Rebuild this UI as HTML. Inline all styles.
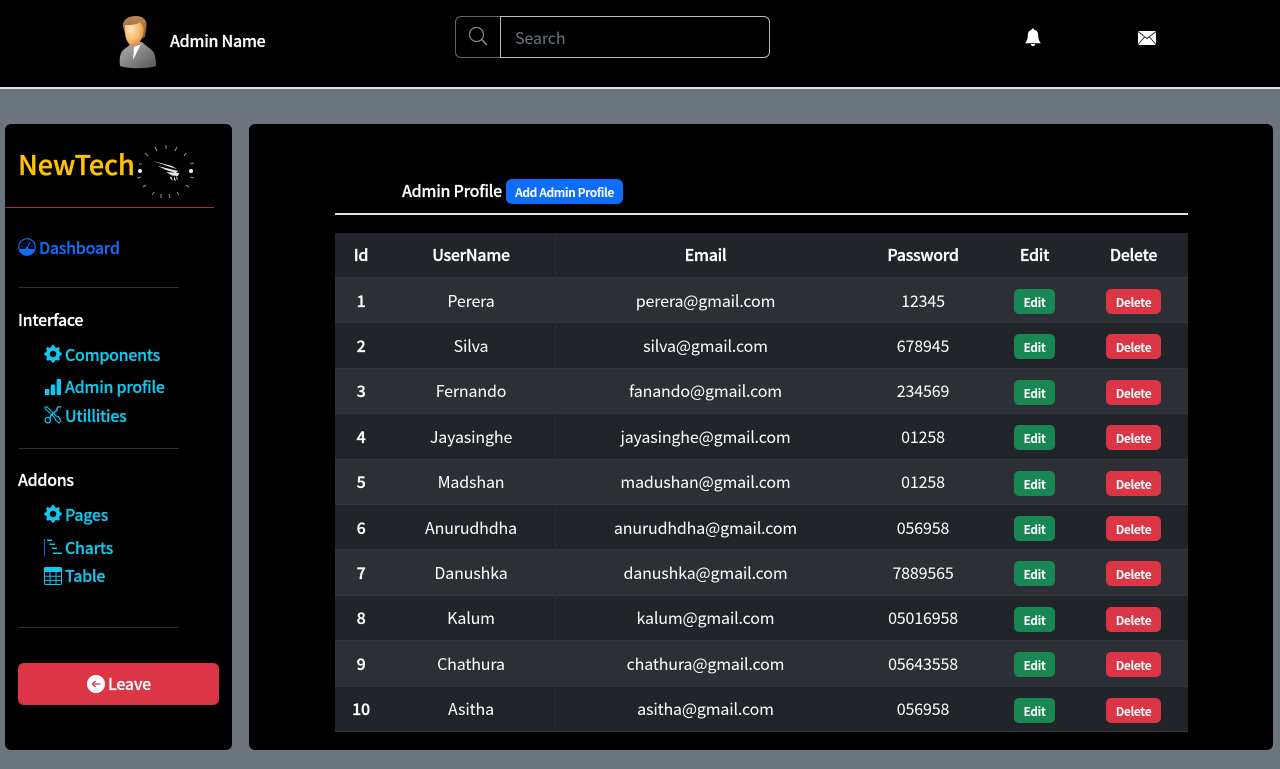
<!DOCTYPE html>
<html lang="en"><head><meta charset="utf-8"><title>Admin</title>
<style>
*{box-sizing:border-box;margin:0;padding:0}
html,body{width:1280px;height:769px;overflow:hidden;background:#6c757d}
body,.n{font-family:"Noto Sans CJK JP","Liberation Sans",sans-serif}
.a{position:absolute;white-space:nowrap;line-height:1}
#top{position:absolute;left:0;top:0;width:1280px;height:87px;background:#000}
#wl{position:absolute;left:0;top:87px;width:1280px;height:2px;background:#dee2e6}
#side{position:absolute;left:5px;top:124px;width:227px;height:626px;background:#000;border-radius:6px}
#main{position:absolute;left:249px;top:124px;width:1024px;height:626px;background:#000;border-radius:6px}
.hr{position:absolute;left:18px;width:161px;height:1px;background:#2f2f2f}
.nav,.h,.s{font-size:16px;font-weight:500;line-height:20px;letter-spacing:-.3px;-webkit-text-stroke:.2px currentColor}
.nav{position:absolute;left:65px;color:#0dcaf0}
.h{position:absolute;left:18px;color:#fff}
svg{position:absolute;display:block}
.row{position:absolute;left:335px;width:853px;border-top:1px solid #33373b}
.c{position:absolute;top:0;height:100%;display:flex;align-items:center;justify-content:center;color:#fff;font-size:16px;white-space:nowrap;padding-bottom:1.4px;letter-spacing:-.15px}
.b{font-weight:500;letter-spacing:-.3px;-webkit-text-stroke:.3px #fff}
.btn{display:block;color:#fff;font-size:12px;font-weight:700;letter-spacing:-.4px;text-align:center;border-radius:5px;height:25px;line-height:27px;margin-top:4px;-webkit-text-stroke:0}
.e{background:#198754;width:41px}
.d{background:#dc3545;width:55px}
</style></head><body>
<div id="top"></div><div id="wl"></div>

<svg style="left:118px;top:14px" width="40" height="56" viewBox="0 0 40 56">
<defs>
<radialGradient id="face" cx=".35" cy=".3" r=".8"><stop offset="0" stop-color="#fee6bf"/><stop offset=".6" stop-color="#f7b468"/><stop offset="1" stop-color="#d47c26"/></radialGradient>
<linearGradient id="suit" x1="0" y1="0" x2="1" y2="1"><stop offset="0" stop-color="#b4b4b4"/><stop offset="1" stop-color="#565656"/></linearGradient>
<linearGradient id="hair" x1="0" y1="0" x2="0" y2="1"><stop offset="0" stop-color="#c08a52"/><stop offset="1" stop-color="#80562c"/></linearGradient>
</defs>
<path d="M2 52C1 44 2 37 8 34L15 28H24L31 34C37 37 38 44 38 52C30 55 10 55 2 52Z" fill="url(#suit)"/>
<path d="M16 33L23 30L15 46Z" fill="#fff"/>
<path d="M5 13C4 6 10 2 18 2C25 2 29 6 28.500 12L27 23L23 25L8 22Z" fill="url(#hair)"/>
<path d="M7 11C12 11 19 11 22 8C25 11 26 14 25.500 18C25 25 20 32 15.500 32C10 32 6 24 7 11Z" fill="url(#face)"/>
</svg>
<div class="a s" style="left:170px;top:29px;line-height:22px;color:#fff">Admin Name</div>

<div class="a" style="left:455px;top:16px;width:46px;height:42px;border:1px solid #5c6870;border-right:1px solid #6c757d;border-radius:6px 0 0 6px"></div>
<svg style="left:468px;top:26px" width="21" height="21" viewBox="0 0 21 21" fill="none" stroke="#7f8c96" stroke-width="1.2"><circle cx="8.5" cy="8.5" r="7"/><path d="M13.6 13.6L18.8 18.8" stroke-width="1.6"/></svg>
<div class="a" style="left:500px;top:16px;width:270px;height:42px;border:1px solid #b8bcc0;border-radius:0 6px 6px 0"></div>
<div class="a" style="left:515px;top:25.500px;font-size:16px;line-height:22px;color:#6c757d;letter-spacing:-.1px">Search</div>

<svg style="left:1024px;top:28px" width="18" height="19" viewBox="0 0 16 18"><path d="M8 0.5C9 .5 9.2 1.2 9.2 1.7C12 2.4 13 4.6 13 7.5C13 10.5 13.8 12.4 15.5 14.4H.5C2.2 12.4 3 10.5 3 7.500C3 4.6 4 2.4 6.8 1.7C6.8 1.2 7 .5 8 .5Z" fill="#fff"/><path d="M6 15.2H10C10 16.6 9 17.2 8 17.2C7 17.2 6 16.6 6 15.2Z" fill="#fff"/></svg>
<svg style="left:1138px;top:31px" width="18" height="14" viewBox="0 0 18 14"><rect x="0" y="0" width="18" height="14" rx="1.5" fill="#fff"/><path d="M.5 1L9 7.5L17.5 1M.5 13L6.5 6M17.5 13L11.5 6" fill="none" stroke="#222" stroke-width=".9"/></svg>

<div id="side"></div><div id="main"></div>

<div class="a" style="left:18px;top:146px;font-size:27px;line-height:36px;font-weight:500;color:#ffc107;letter-spacing:-.05px;-webkit-text-stroke:.35px #ffc107">NewTech</div>
<svg style="left:134px;top:140px" width="64" height="62" viewBox="0 0 64 62">
<g stroke="#8a8a8a" stroke-width="1.1">
<path d="M32 5V9M43 7L41 11M52 13L50 16M60 23L56 24M60 38L56 37M55 47L52 45M45 55L43 52M36 58L35 54M27 58L27 54M18 55L20 52M9 47L12 45M3 38L7 37M5 24L8 24M11 13L14 16M21 7L23 11"/>
</g>
<circle cx="6" cy="31" r="2" fill="#eee"/><circle cx="57" cy="31" r="2" fill="#eee"/>
<path d="M19 21L38 26L43 29L36 27ZM24 26L44 31L42 33L32 30ZM32 32L45 33L44 36L38 35.500ZM37 36L39 41L36 38ZM40 36L42 41L40 40ZM42.500 35.500L44 40L42.500 39Z" fill="#e6e6e6"/>
</svg>
<div class="a" style="left:5px;top:207px;width:209px;height:1px;background:#b02a37"></div>

<svg style="left:18px;top:238px" width="18" height="18" viewBox="0 0 18 18"><circle cx="9" cy="9" r="8.2" fill="none" stroke="#0d6efd" stroke-width="1.2"/><path d="M1.5 11H16.5C16 14.5 13 17 9 17C5 17 2 14.5 1.5 11Z" fill="#0d6efd"/><circle cx="9" cy="10.5" r="1.5" fill="#0d6efd"/><path d="M9 10L12 4.5" stroke="#0d6efd" stroke-width="1.1"/><path d="M3.5 8.5L4.6 8.8M5.8 4.8L6.4 5.7M9.3 3.4V4.4M14.5 8.5L13.4 8.8" stroke="#0d6efd" stroke-width="1"/></svg>
<div class="a s" style="left:39px;top:237px;color:#0d6efd">Dashboard</div>
<div class="hr" style="top:287px"></div>
<div class="h" style="top:309px">Interface</div>

<svg style="left:44px;top:345px" width="18" height="18" viewBox="0 0 16 16"><path fill="#0dcaf0" d="M9.4 1.1c-.4-1.4-2.4-1.4-2.8 0l-.1.3a1.5 1.5 0 0 1-2.1.9l-.3-.2c-1.2-.7-2.6.7-1.9 1.9l.2.3a1.5 1.5 0 0 1-.9 2.1l-.3.1c-1.4.4-1.4 2.4 0 2.8l.3.1a1.5 1.5 0 0 1 .9 2.1l-.2.3c-.7 1.2.7 2.6 1.9 1.9l.3-.2a1.5 1.5 0 0 1 2.1.9l.1.3c.4 1.4 2.4 1.4 2.8 0l.1-.3a1.5 1.5 0 0 1 2.1-.9l.3.2c1.2.7 2.6-.7 1.9-1.9l-.2-.3a1.5 1.5 0 0 1 .9-2.1l.3-.1c1.4-.4 1.4-2.4 0-2.8l-.3-.1a1.5 1.5 0 0 1-.9-2.1l.2-.3c.7-1.2-.7-2.6-1.9-1.9l-.3.2a1.5 1.5 0 0 1-2.1-.9l-.1-.3zM8 10.9a2.9 2.9 0 1 1 0-5.8 2.9 2.9 0 0 1 0 5.8z"/></svg>
<div class="nav" style="top:344px">Components</div>
<svg style="left:45px;top:379px" width="16" height="16" viewBox="0 0 16 16" fill="#0dcaf0"><rect x="0" y="10" width="4.4" height="6" rx=".8"/><rect x="5.8" y="5.5" width="4.4" height="10.5" rx=".8"/><rect x="11.6" y="0" width="4.4" height="16" rx=".8"/></svg>
<div class="nav" style="top:376px">Admin profile</div>
<svg style="left:44px;top:406px" width="18" height="18" viewBox="0 0 18 18" fill="none" stroke="#0dcaf0"><path d="M1 1.200L3 .8L12 10L14 10.500L17 14.500L15 17L11.500 14L11 12L1.500 3Z" stroke-width="1.1"/><path d="M17 1.200C15.500 .4 13.500 1 13 2.500C13 3.200 13.200 3.800 13 4.200L6 10.500" stroke-width="1.400"/><circle cx="3.800" cy="14.200" r="2.700" stroke-width="1.300"/><path d="M5.800 12.200L7 11" stroke-width="1.300"/></svg>
<div class="nav" style="top:405px">Utillities</div>
<div class="hr" style="top:448px"></div>
<div class="h" style="top:469px">Addons</div>

<svg style="left:44px;top:505px" width="18" height="18" viewBox="0 0 16 16"><path fill="#0dcaf0" d="M9.4 1.1c-.4-1.4-2.4-1.4-2.8 0l-.1.3a1.5 1.5 0 0 1-2.1.9l-.3-.2c-1.2-.7-2.6.7-1.9 1.9l.2.3a1.5 1.5 0 0 1-.9 2.1l-.3.1c-1.4.4-1.4 2.4 0 2.8l.3.1a1.5 1.5 0 0 1 .9 2.1l-.2.3c-.7 1.2.7 2.6 1.9 1.9l.3-.2a1.5 1.5 0 0 1 2.1.9l.1.3c.4 1.4 2.4 1.4 2.8 0l.1-.3a1.5 1.5 0 0 1 2.1-.9l.3.2c1.2.7 2.6-.7 1.9-1.9l-.2-.3a1.5 1.5 0 0 1 .9-2.1l.3-.1c1.4-.4 1.4-2.4 0-2.8l-.3-.1a1.5 1.5 0 0 1-.9-2.1l.2-.3c.7-1.2-.7-2.6-1.9-1.9l-.3.2a1.5 1.5 0 0 1-2.1-.9l-.1-.3zM8 10.9a2.9 2.9 0 1 1 0-5.8 2.9 2.9 0 0 1 0 5.8z"/></svg>
<div class="nav" style="top:504px">Pages</div>
<svg style="left:44px;top:539px" width="18" height="17" viewBox="0 0 18 17"><path d="M.5 0V17" stroke="#0d6efd" stroke-width="1"/><path d="M3 1.2H8M5.5 5.2H11M8 9.2H13M9 14.2H18" stroke="#0dcaf0" stroke-width="1.5"/></svg>
<div class="nav" style="top:537px">Charts</div>
<svg style="left:44px;top:567px" width="18" height="18" viewBox="0 0 18 18"><rect x=".5" y=".5" width="17" height="17" rx="1.5" fill="none" stroke="#0dcaf0"/><rect x="0" y="0" width="18" height="5" rx="1.5" fill="#0dcaf0"/><path d="M6 5V17.5M12 5V17.5M.5 9.2H17.5M.5 13.4H17.5" stroke="#0dcaf0" stroke-width="1"/></svg>
<div class="nav" style="top:565px">Table</div>
<div class="hr" style="top:627px"></div>

<div class="a" style="left:18px;top:663px;width:201px;height:42px;background:#dc3545;border-radius:6px"></div>
<svg style="left:87px;top:675px" width="18" height="18" viewBox="0 0 18 18"><circle cx="9" cy="9" r="9" fill="#fff"/><path d="M13.5 9H5.5M8.5 6L5.5 9L8.5 12" fill="none" stroke="#dc3545" stroke-width="1.3"/></svg>
<div class="a s" style="left:108px;top:673px;color:#fff">Leave</div>

<div class="a s" style="left:402px;top:180px;color:#fff">Admin Profile</div>
<div class="a" style="left:506px;top:179px;width:117px;height:25px;background:#0d6efd;border-radius:6px;color:#fff;font-size:12px;font-weight:700;line-height:27px;text-align:center;letter-spacing:-.45px">Add Admin Profile</div>
<div class="a" style="left:335px;top:213px;width:853px;height:2px;background:#dee2e6"></div>

<div class="row" style="top:233px;height:44px;background:#212529;border-top:0"><div class="c b" style="left:0;width:52px;padding-bottom:3px">Id</div><div class="c b" style="left:52px;width:168px;padding-bottom:3px">UserName</div><div class="c b" style="left:220px;width:301px;padding-bottom:3px">Email</div><div class="c b" style="left:521px;width:134px;padding-bottom:3px">Password</div><div class="c b" style="left:655px;width:89px;padding-bottom:3px">Edit</div><div class="c b" style="left:744px;width:109px;padding-bottom:3px">Delete</div></div>

<div class="row" style="top:277px;height:45.4px;background:#2c3034"><div class="c b" style="left:0;width:52px">1</div><div class="c" style="left:52px;width:168px">Perera</div><div class="c" style="left:220px;width:301px">perera@gmail.com</div><div class="c" style="left:521px;width:134px">12345</div><div class="c" style="left:655px;width:89px"><span class="btn e">Edit</span></div><div class="c" style="left:744px;width:109px"><span class="btn d">Delete</span></div></div>
<div class="row" style="top:322.4px;height:45.4px;background:#212529"><div class="c b" style="left:0;width:52px">2</div><div class="c" style="left:52px;width:168px">Silva</div><div class="c" style="left:220px;width:301px">silva@gmail.com</div><div class="c" style="left:521px;width:134px">678945</div><div class="c" style="left:655px;width:89px"><span class="btn e">Edit</span></div><div class="c" style="left:744px;width:109px"><span class="btn d">Delete</span></div></div>
<div class="row" style="top:367.8px;height:45.4px;background:#2c3034"><div class="c b" style="left:0;width:52px">3</div><div class="c" style="left:52px;width:168px">Fernando</div><div class="c" style="left:220px;width:301px">fanando@gmail.com</div><div class="c" style="left:521px;width:134px">234569</div><div class="c" style="left:655px;width:89px"><span class="btn e">Edit</span></div><div class="c" style="left:744px;width:109px"><span class="btn d">Delete</span></div></div>
<div class="row" style="top:413.2px;height:45.4px;background:#212529"><div class="c b" style="left:0;width:52px">4</div><div class="c" style="left:52px;width:168px">Jayasinghe</div><div class="c" style="left:220px;width:301px">jayasinghe@gmail.com</div><div class="c" style="left:521px;width:134px">01258</div><div class="c" style="left:655px;width:89px"><span class="btn e">Edit</span></div><div class="c" style="left:744px;width:109px"><span class="btn d">Delete</span></div></div>
<div class="row" style="top:458.6px;height:45.4px;background:#2c3034"><div class="c b" style="left:0;width:52px">5</div><div class="c" style="left:52px;width:168px">Madshan</div><div class="c" style="left:220px;width:301px">madushan@gmail.com</div><div class="c" style="left:521px;width:134px">01258</div><div class="c" style="left:655px;width:89px"><span class="btn e">Edit</span></div><div class="c" style="left:744px;width:109px"><span class="btn d">Delete</span></div></div>
<div class="row" style="top:504px;height:45.4px;background:#212529"><div class="c b" style="left:0;width:52px">6</div><div class="c" style="left:52px;width:168px">Anurudhdha</div><div class="c" style="left:220px;width:301px">anurudhdha@gmail.com</div><div class="c" style="left:521px;width:134px">056958</div><div class="c" style="left:655px;width:89px"><span class="btn e">Edit</span></div><div class="c" style="left:744px;width:109px"><span class="btn d">Delete</span></div></div>
<div class="row" style="top:549.4px;height:45.4px;background:#2c3034"><div class="c b" style="left:0;width:52px">7</div><div class="c" style="left:52px;width:168px">Danushka</div><div class="c" style="left:220px;width:301px">danushka@gmail.com</div><div class="c" style="left:521px;width:134px">7889565</div><div class="c" style="left:655px;width:89px"><span class="btn e">Edit</span></div><div class="c" style="left:744px;width:109px"><span class="btn d">Delete</span></div></div>
<div class="row" style="top:594.8px;height:45.4px;background:#212529"><div class="c b" style="left:0;width:52px">8</div><div class="c" style="left:52px;width:168px">Kalum</div><div class="c" style="left:220px;width:301px">kalum@gmail.com</div><div class="c" style="left:521px;width:134px">05016958</div><div class="c" style="left:655px;width:89px"><span class="btn e">Edit</span></div><div class="c" style="left:744px;width:109px"><span class="btn d">Delete</span></div></div>
<div class="row" style="top:640.2px;height:45.4px;background:#2c3034"><div class="c b" style="left:0;width:52px">9</div><div class="c" style="left:52px;width:168px">Chathura</div><div class="c" style="left:220px;width:301px">chathura@gmail.com</div><div class="c" style="left:521px;width:134px">05643558</div><div class="c" style="left:655px;width:89px"><span class="btn e">Edit</span></div><div class="c" style="left:744px;width:109px"><span class="btn d">Delete</span></div></div>
<div class="row" style="top:685.6px;height:45.4px;background:#212529"><div class="c b" style="left:0;width:52px">10</div><div class="c" style="left:52px;width:168px">Asitha</div><div class="c" style="left:220px;width:301px">asitha@gmail.com</div><div class="c" style="left:521px;width:134px">056958</div><div class="c" style="left:655px;width:89px"><span class="btn e">Edit</span></div><div class="c" style="left:744px;width:109px"><span class="btn d">Delete</span></div></div>
<div class="a" style="left:335px;top:731px;width:853px;height:1px;background:#373b3e"></div>
<div class="a" style="left:555px;top:233px;width:1px;height:498px;background:#2a2e32"></div>
</body></html>
